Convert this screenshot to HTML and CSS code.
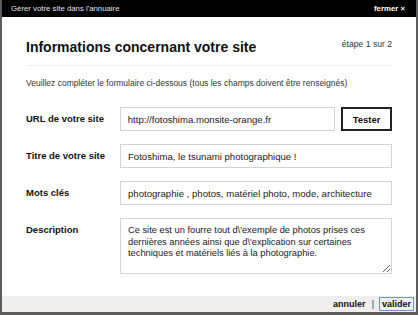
FILE: index.html
```html
<!DOCTYPE html>
<html lang="fr">
<head>
  <meta charset="UTF-8">
  <title>Gérer votre site dans l'annuaire</title>
  <link rel="stylesheet" href="styles.css">
</head>
<body>

  <div class="dialog">
    <div class="titlebar">
      <span>Gérer votre site dans l'annuaire</span>
      <a href="#" class="close">fermer &times;</a>
    </div>

    <div class="content">
      <div class="head">
        <h1>Informations concernant votre site</h1>
        <span class="step">étape 1 sur 2</span>
      </div>

      <p class="intro">Veuillez compléter le formulaire ci-dessous (tous les champs doivent être renseignés)</p>

      <div class="row">
        <label for="url">URL de votre site</label>
        <input type="text" id="url" class="field short" value="http://fotoshima.monsite-orange.fr">
        <button class="test">Tester</button>
      </div>

      <div class="row">
        <label for="titre">Titre de votre site</label>
        <input type="text" id="titre" class="field" value="Fotoshima, le tsunami photographique !">
      </div>

      <div class="row">
        <label for="mots">Mots clés</label>
        <input type="text" id="mots" class="field" value="photographie , photos, matériel photo, mode, architecture">
      </div>

      <div class="row top">
        <label for="desc">Description</label>
        <textarea id="desc" class="field area">Ce site est un fourre tout d\'exemple de photos prises ces dernières années ainsi que d\'explication sur certaines techniques et matériels liés à la photographie.</textarea>
      </div>
    </div>

    <div class="footer">
      <a href="#" class="cancel">annuler</a>
      <span class="sep">|</span>
      <a href="#" class="ok">valider</a>
    </div>
  </div>

</body>
</html>
```

FILE: styles.css
```css
body {
  margin: 0;
  background-color: #5f5b58;
  font-family: "Liberation Sans", Arial, sans-serif;
  color: #111;
}

.dialog {
  margin: 0 2px;
  width: 414px;
  height: 312px;
  background-color: #fff;
  display: flex;
  flex-direction: column;
  overflow: hidden;
}

.titlebar {
  flex: none;
  height: 17px;
  background-color: #000;
  color: #e2e2e2;
  font-size: 7.8px;
  display: flex;
  justify-content: space-between;
  align-items: center;
  padding: 0 11px 0 9px;
}

.close {
  color: #fff;
  font-weight: bold;
  font-size: 7.8px;
  text-decoration: none;
}

.content {
  padding: 22px 24px 0 24px;
}

.head {
  display: flex;
  justify-content: space-between;
  align-items: flex-start;
  padding-bottom: 9px;
  border-bottom: 1px solid #eeeeee;
}

h1 {
  margin: 0;
  font-size: 14px;
  line-height: 17px;
  font-weight: bold;
}

.step {
  font-size: 8.6px;
  line-height: 10px;
  color: #333;
}

.intro {
  margin: 12px 0 18px 0;
  font-size: 8.5px;
  line-height: 11px;
  color: #333;
  white-space: nowrap;
}

.row {
  display: flex;
  align-items: center;
  margin-bottom: 13px;
}

.row.top {
  align-items: flex-start;
}

.row.top label {
  padding-top: 6px;
}

label {
  width: 94px;
  font-size: 9.5px;
  line-height: 12px;
  font-weight: bold;
}

.field {
  box-sizing: border-box;
  width: 272px;
  height: 24px;
  border: 1px solid #d2d2d2;
  padding: 0 7px;
  font-family: "Liberation Sans", Arial, sans-serif;
  font-size: 9.6px;
  color: #1a1a1a;
  background-color: #fff;
}

.field.short {
  width: 216px;
}

.field.area {
  height: 56px;
  padding: 6px 7px;
  font-size: 9.3px;
  line-height: 11.5px;
  resize: vertical;
}

.test {
  box-sizing: border-box;
  margin-left: 6px;
  width: 51px;
  height: 24px;
  border: 2px solid #222;
  background-color: #fff;
  font-family: "Liberation Sans", Arial, sans-serif;
  font-size: 9.5px;
  font-weight: bold;
  color: #111;
}

.footer {
  flex: none;
  margin-top: auto;
  height: 16px;
  background-color: #efefef;
  display: flex;
  justify-content: flex-end;
  align-items: center;
  padding-right: 2px;
  font-size: 9px;
  font-weight: bold;
}

.footer a {
  color: #111;
  text-decoration: none;
}

.sep {
  margin: 0 5px 0 6px;
  font-weight: normal;
  color: #333;
}

.ok {
  border: 1px solid #6a93d8;
  padding: 0 2px;
  line-height: 12px;
}
```
